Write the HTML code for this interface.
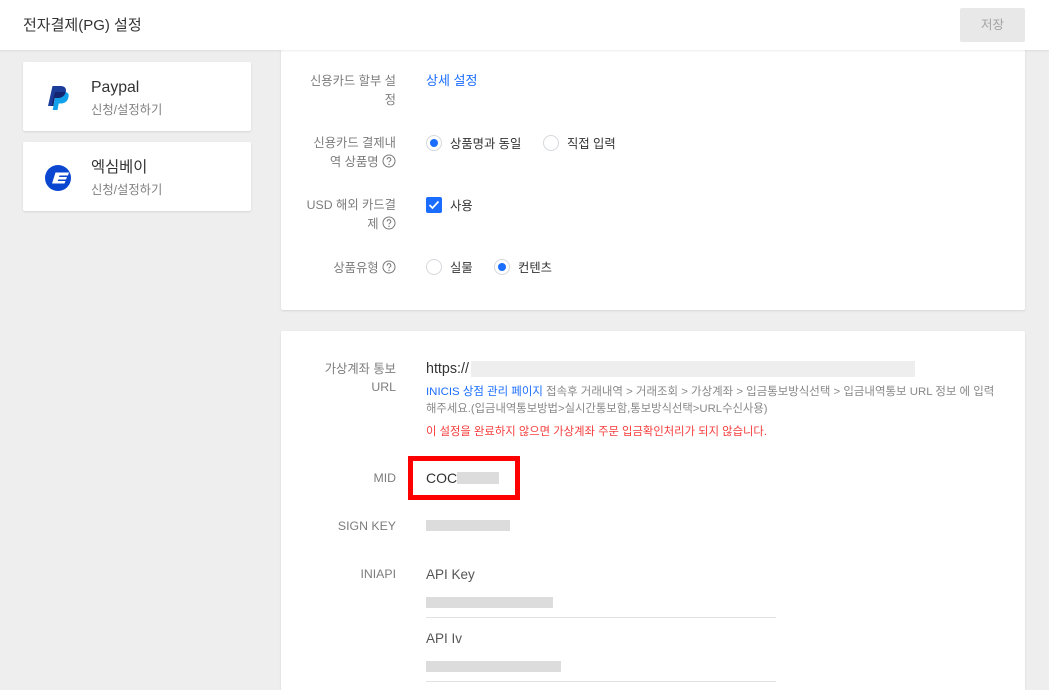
<!DOCTYPE html>
<html lang="ko">
<head>
<meta charset="utf-8">
<style>
html,body{margin:0;padding:0;width:1049px;height:690px;overflow:hidden;background:#eeeeee;}
body{position:relative;font-family:"Liberation Sans","Noto Sans CJK KR",sans-serif;color:#333;}
.a{position:absolute;white-space:nowrap;}
.card{position:absolute;background:#fff;border-radius:2px;box-shadow:0 1px 2px rgba(0,0,0,.1);}
.lbl{position:absolute;white-space:nowrap;font-size:12.3px;line-height:18px;color:#7c7c7c;text-align:right;right:653px;}
.val{position:absolute;white-space:nowrap;font-size:12.3px;line-height:18px;color:#333;}
.g{position:absolute;background:#dcdcdc;}
.radio{position:absolute;width:14px;height:14px;border:1px solid #d5d8dc;border-radius:50%;background:#fff;}
.radio.on:after{content:"";position:absolute;left:3px;top:3px;width:8px;height:8px;border-radius:50%;background:#1a6dff;}
.q{display:inline-block;vertical-align:-2px;}
.sub{position:absolute;white-space:nowrap;font-size:11.45px;line-height:18px;color:#888;}
</style>
</head>
<body>
<div class="a" style="left:0;top:0;width:1049px;height:50px;background:#fff;box-shadow:0 1px 2px rgba(0,0,0,.08);z-index:3"></div>
<div class="a" style="left:23px;top:16px;font-size:15px;line-height:20px;color:#333;z-index:4">전자결제(PG) 설정</div>
<div class="a" style="left:960px;top:8px;width:65px;height:34px;background:#e8e8e8;border-radius:2px;color:#a3a3a3;font-size:12.5px;line-height:34px;text-align:center;z-index:4">저장</div>

<div class="card" style="left:23px;top:62px;width:228px;height:69px"></div>
<svg class="a" style="left:46px;top:84px" width="25" height="28" viewBox="0 0 25 28">
<path d="M10 8h9.500c3 .8 3.500 2.500 3 5-.7 4-3.500 6.500-7.500 6.500h-2.300L11.500 26H6.700z" fill="#12a0ea"/>
<path d="M6.500 2h8c4 0 6 2 5.400 5.500-.7 4-4 6.500-8 6.500H8.700L7.300 22H2z" fill="#1c3c9a"/>
<path d="M9 8h10.400c-.8 3.800-3.800 6-7.600 6H8.700l-1.400 8H5.500z" fill="#14246e"/>
</svg>
<div class="a" style="left:91px;top:78px;font-size:15.800px;line-height:20px;color:#333">Paypal</div>
<div class="a" style="left:91px;top:101px;font-size:12.3px;line-height:18px;color:#808080">신청/설정하기</div>

<div class="card" style="left:23px;top:142px;width:228px;height:69px"></div>
<svg class="a" style="left:45px;top:165px" width="26" height="26" viewBox="0 0 26 26">
<circle cx="13" cy="13" r="13" fill="#0b46d0"/>
<path d="M10.500 7.500H24L23 10.500H14.500L14 12H22L21 14.500H13.300L12.800 16H20.500L19.500 18.500H7z" fill="#fff"/>
</svg>
<div class="a" style="left:91px;top:158px;font-size:15.300px;line-height:20px;color:#333">엑심베이</div>
<div class="a" style="left:91px;top:181px;font-size:12.3px;line-height:18px;color:#808080">신청/설정하기</div>

<div class="card" style="left:281px;top:40px;width:744px;height:270px"></div>
<div class="card" style="left:281px;top:331px;width:744px;height:380px"></div>

<div class="lbl" style="top:72px">신용카드 할부 설</div>
<div class="lbl" style="top:91px">정</div>
<div class="a" style="left:426px;top:72px;font-size:13px;line-height:18px;color:#1a6dff">상세 설정</div>

<div class="lbl" style="top:134px">신용카드 결제내</div>
<div class="lbl" style="top:153px">역 상품명 <svg class="q" width="14" height="14" viewBox="0 0 14 14"><circle cx="7" cy="7" r="6" fill="none" stroke="#777" stroke-width="1"/><path d="M5.200 5.500a1.800 1.800 0 1 1 2.700 1.500c-.6.400-.9.700-.9 1.400" fill="none" stroke="#777"/><circle cx="7" cy="10.300" r=".7" fill="#777"/></svg></div>
<div class="radio on" style="left:426px;top:135px"></div>
<div class="val" style="left:450px;top:135px">상품명과 동일</div>
<div class="radio" style="left:543px;top:135px"></div>
<div class="val" style="left:567px;top:135px">직접 입력</div>

<div class="lbl" style="top:196px">USD 해외 카드결</div>
<div class="lbl" style="top:215px">제 <svg class="q" width="14" height="14" viewBox="0 0 14 14"><circle cx="7" cy="7" r="6" fill="none" stroke="#777" stroke-width="1"/><path d="M5.200 5.500a1.800 1.800 0 1 1 2.700 1.500c-.6.400-.9.700-.9 1.400" fill="none" stroke="#777"/><circle cx="7" cy="10.300" r=".7" fill="#777"/></svg></div>
<div class="a" style="left:426px;top:197px;width:16px;height:16px;background:#1a6dff;border-radius:2px"><svg width="16" height="16" viewBox="0 0 16 16" style="display:block"><path d="M3.500 8l3 3 6-6.500" fill="none" stroke="#fff" stroke-width="1.700"/></svg></div>
<div class="val" style="left:450px;top:197px">사용</div>

<div class="lbl" style="top:259px">상품유형 <svg class="q" width="14" height="14" viewBox="0 0 14 14"><circle cx="7" cy="7" r="6" fill="none" stroke="#777" stroke-width="1"/><path d="M5.200 5.500a1.800 1.800 0 1 1 2.700 1.500c-.6.400-.9.700-.9 1.400" fill="none" stroke="#777"/><circle cx="7" cy="10.300" r=".7" fill="#777"/></svg></div>
<div class="radio" style="left:426px;top:259px"></div>
<div class="val" style="left:450px;top:259px">실물</div>
<div class="radio on" style="left:494px;top:259px"></div>
<div class="val" style="left:518px;top:259px">컨텐츠</div>

<div class="lbl" style="top:360px">가상계좌 통보</div>
<div class="lbl" style="top:378px">URL</div>
<div class="val" style="left:426px;top:360px;font-size:14.300px;">https://</div>
<div class="a" style="left:471px;top:361px;width:444px;height:16px;background:#eeeeee"></div>
<div class="sub" style="left:426px;top:383px"><span style="color:#1a6dff">INICIS 상점 관리 페이지</span> 접속후 거래내역 &gt; 거래조회 &gt; 가상계좌 &gt; 입금통보방식선택 &gt; 입금내역통보 URL 정보 에 입력</div>
<div class="sub" style="left:426px;top:400px;font-size:11.33px">해주세요.(입금내역통보방법&gt;실시간통보함,통보방식선택&gt;URL수신사용)</div>
<div class="sub" style="left:426px;top:423px;color:#f53c3c;font-size:11.33px">이 설정을 완료하지 않으면 가상계좌 주문 입금확인처리가 되지 않습니다.</div>

<div class="lbl" style="top:469px">MID</div>
<div class="a" style="left:408px;top:456px;width:102px;height:34px;border:5px solid #ff0000"></div>
<div class="val" style="left:426px;top:469px;font-size:14px">COC</div>
<div class="g" style="left:457px;top:472px;width:42px;height:12px"></div>

<div class="lbl" style="top:517px">SIGN KEY</div>
<div class="g" style="left:426px;top:520px;width:84px;height:11px"></div>

<div class="lbl" style="top:565px">INIAPI</div>
<div class="val" style="left:426px;top:566px;font-size:13.500px;color:#555">API Key</div>
<div class="g" style="left:426px;top:597px;width:127px;height:11px"></div>
<div class="a" style="left:426px;top:617px;width:350px;height:1px;background:#e2e2e2"></div>
<div class="val" style="left:426px;top:630px;font-size:13.500px;color:#555">API Iv</div>
<div class="g" style="left:426px;top:661px;width:135px;height:11px"></div>
<div class="a" style="left:426px;top:681px;width:350px;height:1px;background:#e2e2e2"></div>
</body>
</html>
